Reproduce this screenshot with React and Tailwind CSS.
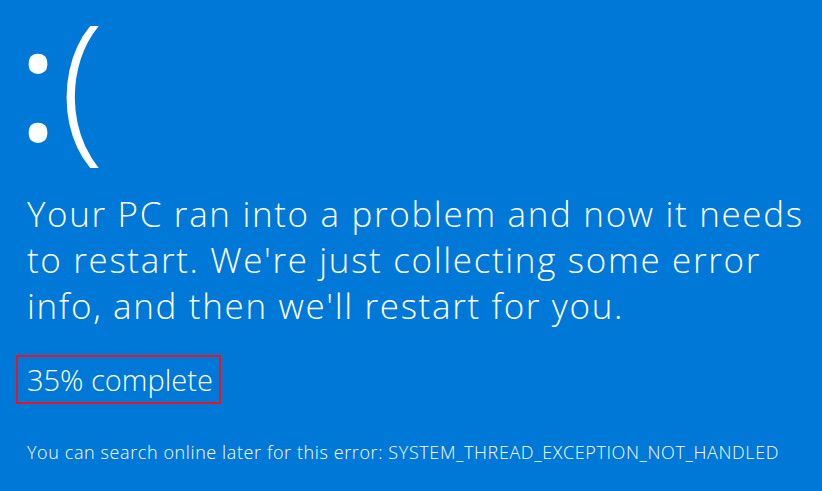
import React from 'react';

const App = () => {
  return (
    <div className="w-[822px] h-[491px] bg-[#0078d7] text-white overflow-hidden font-['Open_Sans',sans-serif]">
      <div className="pl-[27px]">
        {/* sad face */}
        <div className="flex items-start h-[180px] leading-none">
          <span className="text-[160px] font-medium mt-[-1px] ml-[-10px]">:</span>
          <span className="text-[162px] font-light mt-[-2px] ml-[1px]">(</span>
        </div>

        <p className="mt-[11px] w-[800px] text-[35px] leading-[46px] font-light tracking-[1.65px]">
          Your PC ran into a problem and now it needs to restart. We're just collecting some error info, and then we'll restart for you.
        </p>

        <div className="mt-[26px] -ml-[11px] w-[205px] h-[49px] border-2 border-[#e8141f] flex items-center pl-[9px]">
          <span className="text-[29px] font-light leading-none">35% complete</span>
        </div>

        <p className="mt-[37px] text-[18px] font-light leading-[22px] tracking-[0.6px]">
          You can search online later for this error: SYSTEM_THREAD_EXCEPTION_NOT_HANDLED
        </p>
      </div>
    </div>
  );
};

export default App;
